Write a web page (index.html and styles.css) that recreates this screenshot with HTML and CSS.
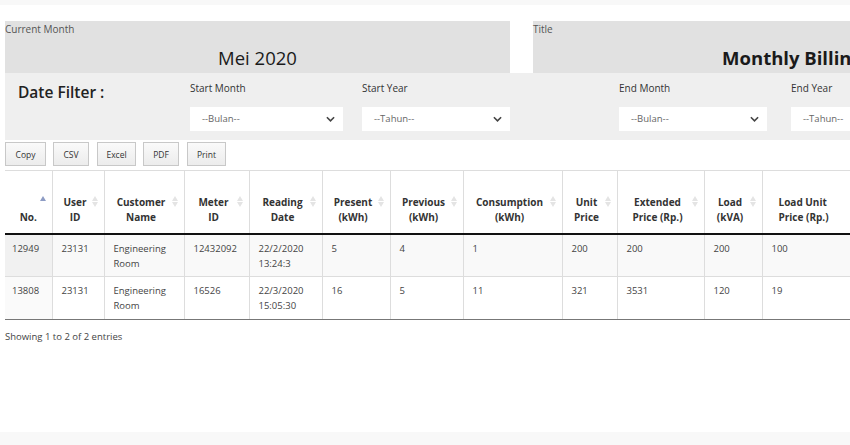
FILE: index.html
```html
<!DOCTYPE html>
<html>
<head>
<meta charset="utf-8">
<link rel="stylesheet" href="styles.css">
</head>
<body>
<div class="topbar"></div>
<div class="head">
  <div class="box box-month">
    <div class="box-label">Current Month</div>
    <div class="box-value">Mei 2020</div>
  </div>
  <div class="box box-title">
    <div class="box-label">Title</div>
    <div class="box-value bold">Monthly Billing</div>
  </div>
</div>
<div class="filter">
  <div class="filter-title">Date Filter :</div>
  <div class="field">
    <div class="field-label">Start Month</div>
    <div class="select">--Bulan--<svg class="chev" viewBox="0 0 10 6"><path d="M1 1l4 4 4-4" /></svg></div>
  </div>
  <div class="field">
    <div class="field-label">Start Year</div>
    <div class="select">--Tahun--<svg class="chev" viewBox="0 0 10 6"><path d="M1 1l4 4 4-4" /></svg></div>
  </div>
  <div class="field">
    <div class="field-label">End Month</div>
    <div class="select">--Bulan--<svg class="chev" viewBox="0 0 10 6"><path d="M1 1l4 4 4-4" /></svg></div>
  </div>
  <div class="field">
    <div class="field-label">End Year</div>
    <div class="select">--Tahun--<svg class="chev" viewBox="0 0 10 6"><path d="M1 1l4 4 4-4" /></svg></div>
  </div>
</div>
<div class="buttons">
  <button class="btn b-copy">Copy</button>
  <button class="btn b-csv">CSV</button>
  <button class="btn b-excel">Excel</button>
  <button class="btn b-pdf">PDF</button>
  <button class="btn b-print">Print</button>
</div>
<table class="grid">
  <colgroup>
    <col class="c1"><col class="c2"><col class="c3"><col class="c4"><col class="c5"><col class="c6"><col class="c7"><col class="c8"><col class="c9"><col class="c10"><col class="c11"><col class="c12">
  </colgroup>
  <thead>
    <tr>
      <th class="sorted">No.<span class="asc"></span></th>
      <th>User<br>ID<span class="both"></span></th>
      <th>Customer<br>Name<span class="both"></span></th>
      <th>Meter<br>ID<span class="both"></span></th>
      <th>Reading<br>Date<span class="both"></span></th>
      <th>Present<br>(kWh)<span class="both"></span></th>
      <th>Previous<br>(kWh)<span class="both"></span></th>
      <th>Consumption<br>(kWh)<span class="both"></span></th>
      <th>Unit<br>Price<span class="both"></span></th>
      <th>Extended<br>Price (Rp.)<span class="both"></span></th>
      <th>Load<br>(kVA)<span class="both"></span></th>
      <th>Load Unit<br>Price (Rp.)<span class="both"></span></th>
    </tr>
  </thead>
  <tbody>
    <tr class="odd">
      <td class="s1">12949</td><td>23131</td><td>Engineering Room</td><td>12432092</td><td>22/2/2020 13:24:3</td><td>5</td><td>4</td><td>1</td><td>200</td><td>200</td><td>200</td><td>100</td>
    </tr>
    <tr class="even">
      <td class="s1">13808</td><td>23131</td><td>Engineering Room</td><td>16526</td><td>22/3/2020 15:05:30</td><td>16</td><td>5</td><td>11</td><td>321</td><td>3531</td><td>120</td><td>19</td>
    </tr>
  </tbody>
</table>
<div class="info">Showing 1 to 2 of 2 entries</div>
<div class="footbar"></div>
</body>
</html>
```
FILE: styles.css
```css
* { box-sizing: border-box; }
html, body { margin: 0; padding: 0; }
body {
  width: 850px;
  height: 445px;
  overflow: hidden;
  background: #fff;
  font-family: "Open Sans", "Liberation Sans", sans-serif;
  color: #333;
  position: relative;
}
.topbar { height: 5px; background: #f8f8f8; }
.head {
  display: flex;
  gap: 23px;
  margin-top: 16px;
  padding-left: 5px;
  width: 1200px;
}
.box {
  background: #e1e1e1;
  height: 52px;
  position: relative;
}
.box-month { width: 505px; }
.box-title { width: 518px; }
.box-label {
  font-size: 10px;
  line-height: 14px;
  color: #555;
  padding-top: 1px;
}
.box-value {
  text-align: center;
  font-size: 18.5px;
  line-height: 24px;
  margin-top: 10px;
  color: #1a1a1a;
}
.box-value.bold { font-weight: 700; }
.filter {
  margin-left: 5px;
  width: 1200px;
  height: 67px;
  background: #efefef;
  display: grid;
  grid-template-columns: 185px 172px 257px 172px 172px;
}
.filter-title {
  font-size: 15.5px;
  font-weight: 600;
  color: #222;
  padding-left: 13px;
  padding-top: 8px;
}
.field { padding-top: 8px; }
.field-label {
  font-size: 10px;
  line-height: 14px;
  color: #333;
  font-weight: 500;
}
.select {
  margin-top: 12px;
  width: 148px;
  height: 24px;
  background: #fff;
  font-size: 9.5px;
  color: #666;
  line-height: 24px;
  padding-left: 12px;
  position: relative;
}
.field:nth-child(2) .select { width: 153px; }
.chev {
  position: absolute;
  right: 8px;
  top: 9px;
  width: 9px;
  height: 6px;
  fill: none;
  stroke: #444;
  stroke-width: 1.8;
}
.buttons {
  display: flex;
  padding-left: 5px;
  margin-top: 2px;
  height: 24px;
}
.btn {
  height: 24px;
  margin: 0;
  padding: 0;
  border: 1px solid #c8c8c8;
  background: linear-gradient(#fafafa, #ececec);
  font-family: "Open Sans", "Liberation Sans", sans-serif;
  font-size: 8.5px;
  color: #333;
}
.b-copy { width: 41px; margin-right: 7px; }
.b-csv { width: 36px; margin-right: 8px; }
.b-excel { width: 39px; margin-right: 7px; }
.b-pdf { width: 36px; margin-right: 8px; }
.b-print { width: 39px; }
.grid {
  margin-top: 4px;
  margin-left: 5px;
  border-collapse: collapse;
  table-layout: fixed;
  width: 900px;
  font-size: 9.5px;
}
.c1 { width: 47px; } .c2 { width: 52px; } .c3 { width: 80px; } .c4 { width: 65px; }
.c5 { width: 73px; } .c6 { width: 68px; } .c7 { width: 73px; } .c8 { width: 99px; }
.c9 { width: 55px; } .c10 { width: 87px; } .c11 { width: 58px; } .c12 { width: 143px; }
.grid th {
  height: 63px;
  border-top: 1px solid #ddd;
  border-left: 1px solid #ddd;
  border-right: 1px solid #ddd;
  border-bottom: 2px solid #111;
  vertical-align: bottom;
  text-align: center;
  font-weight: 700;
  font-size: 10px;
  line-height: 15px;
  color: #333;
  padding: 0 14px 8px 8px;
  position: relative;
  white-space: nowrap;
}
.grid th:first-child { border-left: none; padding-right: 8px; }
.grid th:nth-child(12) { text-align: left; padding-left: 16px; }
.asc, .both { position: absolute; right: 6px; top: 25px; width: 6px; height: 12px; }
.asc::before {
  content: "";
  position: absolute; left: 0; top: 0;
  border-left: 3px solid transparent; border-right: 3px solid transparent;
  border-bottom: 5px solid #8d9cc4;
}
.both::before, .both::after {
  content: "";
  position: absolute; left: 0;
  border-left: 3px solid transparent; border-right: 3px solid transparent;
}
.both::before { top: 0; border-bottom: 5px solid #e4e4e4; }
.both::after { top: 6px; border-top: 5px solid #e4e4e4; }
.grid td {
  height: 43px;
  vertical-align: top;
  padding: 6px 8px 0 9px;
  line-height: 15px;
  color: #444;
  border: 1px solid #ddd;
  border-top: none;
}
.grid td:first-child { border-left: none; padding-left: 7px; }
.grid tr.odd td { background: #f9f9f9; }
.grid tr.odd td.s1 { background: #f1f1f1; }
.grid tr.even td.s1 { background: #fafafa; }
.grid tbody tr:last-child td { border-bottom: 1px solid #777; }
.info {
  font-size: 9.5px;
  color: #444;
  padding-left: 5px;
  margin-top: 10px;
  line-height: 14px;
}
.footbar {
  position: absolute;
  left: 0; bottom: 0;
  width: 850px; height: 13px;
  background: #f8f8f8;
}
```
